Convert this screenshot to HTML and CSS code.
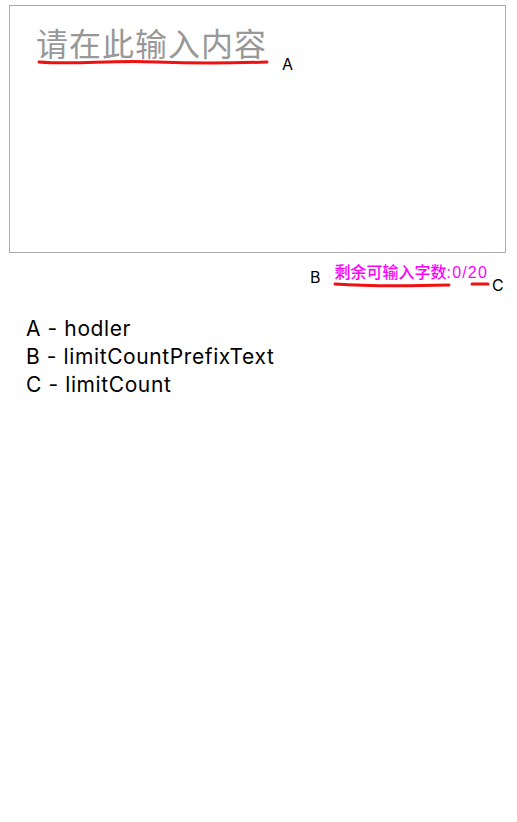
FILE: index.html
```html
<!DOCTYPE html>
<html>
<head>
<meta charset="utf-8">
<link rel="stylesheet" href="styles.css">
</head>
<body>
<div class="page">
  <div class="editor">
    <div class="placeholder-wrap">
      <span class="placeholder">请在此输入内容</span>
      <svg class="mark mark-a" width="232" height="8" viewBox="0 0 232 8"><path d="M2 4 C 40 7, 70 2, 120 4 S 200 5, 230 4" stroke="#f01010" stroke-width="3" fill="none" stroke-linecap="round"/></svg>
      <span class="label label-a">A</span>
    </div>
  </div>
  <div class="counter-row">
    <span class="label label-b">B</span>
    <span class="counter">剩余可输入字数<span class="count-num">:0/20</span>
      <svg class="mark mark-b" width="118" height="6" viewBox="0 0 118 6"><path d="M2 2 C 30 4, 80 4, 116 3" stroke="#f01010" stroke-width="3" fill="none" stroke-linecap="round"/></svg>
      <svg class="mark mark-c" width="20" height="6" viewBox="0 0 20 6"><path d="M2 3 L 18 3" stroke="#f01010" stroke-width="3" fill="none" stroke-linecap="round"/></svg>
    </span>
    <span class="label label-c">C</span>
  </div>
  <div class="legend">
    <div>A - hodler</div>
    <div>B - limitCountPrefixText</div>
    <div>C - limitCount</div>
  </div>
</div>
</body>
</html>
```
FILE: styles.css
```css
html, body {
  margin: 0;
  padding: 0;
  background: #fff;
}
.page {
  width: 517px;
  font-family: Inter, "Noto Sans CJK SC", sans-serif;
}
.editor {
  margin: 5px 0 0 9px;
  width: 495px;
  height: 246px;
  border: 1.5px solid #ababab;
  box-sizing: content-box;
}
.placeholder-wrap {
  position: relative;
  padding: 18px 0 0 26px;
}
.placeholder {
  font-family: "Noto Sans CJK SC", sans-serif;
  font-size: 32px;
  line-height: 36px;
  color: #989898;
  letter-spacing: 1px;
}
.mark {
  position: absolute;
  display: block;
}
.mark-a {
  left: 27px;
  top: 52px;
}
.label {
  font-family: Inter, sans-serif;
  color: #000;
  font-size: 16px;
}
.label-a {
  position: absolute;
  left: 272px;
  top: 48px;
}
.counter-row {
  display: flex;
  align-items: flex-start;
  padding: 10px 0 0 310px;
  height: 34px;
  box-sizing: border-box;
}
.label-b {
  margin-top: 4px;
}
.counter {
  position: relative;
  margin-left: 14px;
  font-family: "Liberation Sans", "Noto Sans CJK SC", sans-serif;
  font-size: 16px;
  font-weight: 500;
  line-height: 20px;
  color: #ff00ff;
}
.count-num {
  letter-spacing: 1.2px;
}
.mark-b {
  left: -1px;
  top: 19px;
}
.mark-c {
  left: 136px;
  top: 18px;
}
.label-c {
  margin-left: 4px;
  margin-top: 12px;
}
.legend {
  padding: 28px 0 0 26px;
  font-family: Inter, sans-serif;
  font-size: 21px;
  line-height: 28px;
  letter-spacing: 0.6px;
  color: #000;
}
```
